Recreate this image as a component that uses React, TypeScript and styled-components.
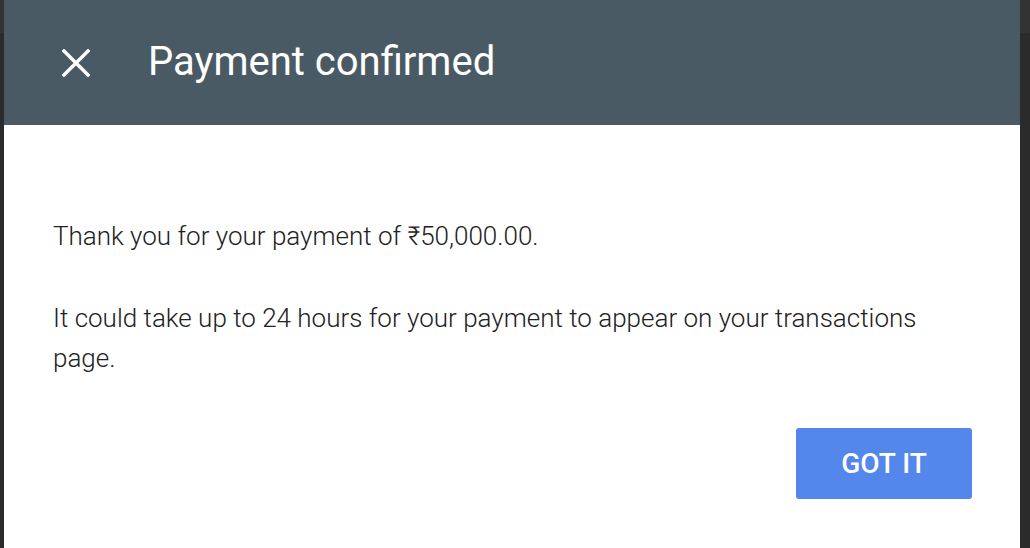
import styled, { createGlobalStyle } from "styled-components";

const GlobalStyle = createGlobalStyle`
    html, body {
        margin: 0;
        padding: 0;
        height: 100%;
        background-color: #2b2b2b;
        font-family: Roboto, "Liberation Sans", sans-serif;
    }
`;

const Backdrop = styled.div`
    display: flex;
    height: 548px;
    padding: 0 10px 0 4px;
    background: linear-gradient(#333333 0, #333333 33px, #262626 34px, #2b2b2b 35px);
`;

const Dialog = styled.div`
    flex: 1;
    display: flex;
    flex-direction: column;
    background-color: #ffffff;
`;

const Header = styled.header`
    display: flex;
    align-items: center;
    height: 125px;
    background-color: #4a5a64;
    color: #ffffff;
    padding-left: 54px;
`;

const CloseButton = styled.button`
    display: flex;
    align-items: center;
    justify-content: center;
    width: 36px;
    height: 36px;
    padding: 0;
    margin-right: 54px;
    border: none;
    background: none;
    cursor: pointer;
`;

const Title = styled.h1`
    margin: 0 0 2px 0;
    font-size: 40px;
    font-weight: 400;
`;

const Body = styled.div`
    display: flex;
    flex-direction: column;
    padding: 91px 48px 0 49px;
`;

const Text = styled.p`
    margin: 0 0 42px 0;
    font-size: 26px;
    font-weight: 300;
    line-height: 40px;
    color: #212121;
`;

const Actions = styled.div`
    display: flex;
    justify-content: flex-end;
    margin-top: 8px;
`;

const PrimaryButton = styled.button`
    width: 176px;
    height: 71px;
    border: none;
    border-radius: 3px;
    background-color: #5387ec;
    color: #ffffff;
    font-family: Roboto, "Liberation Sans", sans-serif;
    font-size: 28px;
    font-weight: 500;
    cursor: pointer;
`;

export default function App() {
    return (
        <Backdrop>
            <GlobalStyle/>
            <Dialog>
                <Header>
                    <CloseButton aria-label="Close">
                        <svg width="28" height="28" viewBox="0 0 28 28">
                            <path d="M2 2 L26 26 M26 2 L2 26" stroke="#ffffff" strokeWidth="3.4" strokeLinecap="square"/>
                        </svg>
                    </CloseButton>
                    <Title>Payment confirmed</Title>
                </Header>

                <Body>
                    <Text>Thank you for your payment of ₹50,000.00.</Text>
                    <Text>It could take up to 24 hours for your payment to appear on your transactions page.</Text>
                    <Actions>
                        <PrimaryButton>GOT IT</PrimaryButton>
                    </Actions>
                </Body>
            </Dialog>
        </Backdrop>
    );
}
